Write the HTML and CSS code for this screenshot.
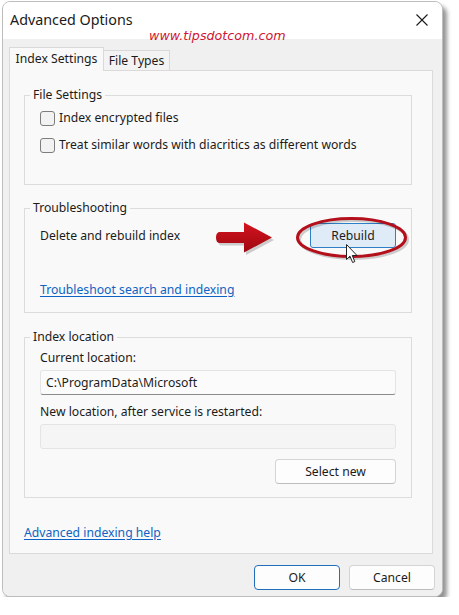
FILE: index.html
```html
<!DOCTYPE html>
<html>
<head>
<meta charset="utf-8">
<title>Advanced Options</title>
<link rel="stylesheet" href="styles.css">
</head>
<body>
<div class="dialog">
  <div class="titlebar">
    <span class="title">Advanced Options</span>
    <span class="watermark">www.tipsdotcom.com</span>
    <svg class="close" width="12" height="12" viewBox="0 0 12 12"><path d="M0.5 0.5 L11.5 11.5 M11.5 0.5 L0.5 11.5" stroke="#1a1a1a" stroke-width="1.1" fill="none"/></svg>
  </div>
  <div class="content">
    <div class="tabs">
      <div class="tab active">Index Settings</div>
      <div class="tab">File Types</div>
    </div>
    <div class="panel">
      <fieldset class="group g-file">
        <legend>File Settings</legend>
        <div class="check"><span class="box"></span><span>Index encrypted files</span></div>
        <div class="check second"><span class="box"></span><span>Treat similar words with diacritics as different words</span></div>
      </fieldset>
      <fieldset class="group g-trouble">
        <legend>Troubleshooting</legend>
        <div class="row">
          <span>Delete and rebuild index</span>
          <div class="rebuild-wrap">
            <svg class="arrow" width="62" height="34" viewBox="0 0 62 34">
              <defs>
                <linearGradient id="ag" x1="0" y1="0" x2="0" y2="1">
                  <stop offset="0" stop-color="#d4141f"/>
                  <stop offset="1" stop-color="#9e0711"/>
                </linearGradient>
              </defs>
              <path d="M8 12.5 L32 12.5 L32 3 L60 18 L32 33 L32 23.5 L8 23.5 Q4 23.5 4 18 Q4 12.5 8 12.5 Z" fill="#000" opacity="0.18"/>
              <path d="M6 10 L30 10 L30 0.5 L58 15.5 L30 30.5 L30 21 L6 21 Q2 21 2 15.5 Q2 10 6 10 Z" fill="url(#ag)"/>
            </svg>
            <button class="btn rebuild">Rebuild</button>
            <svg class="ellipse" width="116" height="46" viewBox="0 0 116 46">
              <ellipse cx="58.5" cy="23.5" rx="54" ry="19" fill="none" stroke="#000" stroke-opacity="0.18" stroke-width="3"/>
              <ellipse cx="56.5" cy="21.5" rx="54" ry="19" fill="none" stroke="#b3101c" stroke-width="3"/>
            </svg>
            <svg class="cursor" width="13" height="20" viewBox="0 0 13 20">
              <path d="M0.5 0.5 L0.5 15.5 L4 12.2 L6.6 18.5 L8.8 17.6 L6.3 11.5 L11 11.5 Z" fill="#fff" stroke="#222" stroke-width="1" stroke-linejoin="round"/>
            </svg>
          </div>
        </div>
        <a class="link trouble-link" href="#">Troubleshoot search and indexing</a>
      </fieldset>
      <fieldset class="group g-loc">
        <legend>Index location</legend>
        <div class="lbl first">Current location:</div>
        <div class="field">C:\ProgramData\Microsoft</div>
        <div class="lbl">New location, after service is restarted:</div>
        <div class="field empty"></div>
        <div class="btnrow"><button class="btn select">Select new</button></div>
      </fieldset>
      <a class="link help" href="#">Advanced indexing help</a>
    </div>
    <div class="footer">
      <button class="btn primary">OK</button>
      <button class="btn">Cancel</button>
    </div>
  </div>
</div>
</body>
</html>
```

FILE: styles.css
```css
html, body {
  margin: 0;
  padding: 0;
  background: #ffffff;
}

body {
  font-family: "Noto Sans", "Segoe UI", sans-serif;
  font-size: 12.2px;
  line-height: 16px;
  color: #1b1b1b;
}

.dialog {
  box-sizing: border-box;
  margin: 1px 0 0 2px;
  width: 441px;
  height: 596px;
  border: 1px solid #bdbdbd;
  border-radius: 8px;
  overflow: hidden;
  display: flex;
  flex-direction: column;
  box-shadow: 4px 5px 4px rgba(0, 0, 0, 0.42);
  background: #f0f0f0;
}

.titlebar {
  position: relative;
  height: 37px;
  flex: none;
  background: #ffffff;
  display: flex;
  align-items: center;
  padding-left: 7px;
}

.title {
  font-size: 14.3px;
  line-height: 18px;
  color: #1a1a1a;
  margin-top: -1px;
}

.watermark {
  position: absolute;
  left: 146px;
  top: 26px;
  font-family: "DejaVu Sans", sans-serif;
  font-style: italic;
  font-size: 12.7px;
  line-height: 16px;
  color: #cf1431;
}

.close {
  position: absolute;
  left: 413px;
  top: 12px;
}

.content {
  flex: 1;
  display: flex;
  flex-direction: column;
  background: #f0f0f0;
}

.tabs {
  display: flex;
  align-items: flex-end;
  height: 32px;
  margin: 0 0 -1px 6px;
  position: relative;
  z-index: 1;
}

.tab {
  box-sizing: border-box;
  border: 1px solid #d9d9d9;
  border-bottom: none;
  background: #f3f3f3;
  display: flex;
  align-items: center;
  justify-content: center;
  color: #1b1b1b;
}

.tab.active {
  width: 95px;
  height: 24px;
  background: #f9f9f9;
  padding-bottom: 1px;
}

.tab:not(.active) {
  width: 66px;
  height: 20px;
  border-left: none;
  margin-bottom: 1px;
  padding-top: 1px;
}

.panel {
  box-sizing: border-box;
  margin-left: 6px;
  width: 424px;
  height: 484px;
  border: 1px solid #dadada;
  background: #f9f9f9;
  padding: 0 20px 0 14px;
  display: flex;
  flex-direction: column;
  align-items: flex-start;
}

.group {
  box-sizing: border-box;
  width: 388px;
  margin: 0;
  padding: 0 15px 0 15px;
  border: 1px solid #dcdcdc;
  min-width: 0;
}

.group legend {
  padding: 0 3px;
  margin-left: -10px;
  line-height: 14px;
}

.g-file {
  margin-top: 17px;
  padding-bottom: 29px;
}

.check {
  display: flex;
  align-items: center;
  height: 20px;
  margin-top: 6px;
}

.check.second {
  margin-top: 7px;
}

.box {
  box-sizing: border-box;
  width: 15px;
  height: 15px;
  border: 1px solid #7d7d7d;
  border-radius: 3px;
  background: #f2f2f2;
  margin-right: 4px;
  flex: none;
}

.g-trouble {
  margin-top: 16px;
  padding-bottom: 14px;
}

.row {
  display: flex;
  align-items: center;
  justify-content: space-between;
  margin-top: 8px;
  height: 25px;
}

.rebuild-wrap {
  position: relative;
  width: 86px;
  height: 25px;
}

.btn {
  box-sizing: border-box;
  font-family: "Noto Sans", "Segoe UI", sans-serif;
  font-size: 12.2px;
  line-height: 16px;
  color: #1b1b1b;
  height: 25px;
  padding: 0;
  background: #fdfdfd;
  border: 1px solid #d4d4d4;
  border-bottom-color: #bdbdbd;
  border-radius: 4px;
}

.rebuild {
  width: 86px;
  background: #dfecf8;
  border: 1px solid #2f7fc6;
  border-radius: 3px;
}

.arrow {
  position: absolute;
  left: -96px;
  top: -1px;
}

.ellipse {
  position: absolute;
  left: -15px;
  top: -7px;
  pointer-events: none;
}

.cursor {
  position: absolute;
  left: 36px;
  top: 21px;
}

.link {
  color: #0d63c4;
  text-decoration: underline;
  text-underline-offset: 2px;
}

.trouble-link {
  display: block;
  margin-top: 34px;
  width: max-content;
}

.g-loc {
  margin-top: 17px;
  padding-bottom: 13px;
}

.lbl {
  margin-top: 9px;
}

.lbl.first {
  margin-top: 6px;
}

.field {
  box-sizing: border-box;
  height: 25px;
  margin-top: 4px;
  padding-left: 5px;
  display: flex;
  align-items: center;
  background: #fbfbfb;
  border: 1px solid #e4e4e4;
  border-bottom: 1px solid #8a8a8a;
  border-radius: 3px;
}

.field.empty {
  background: #f5f5f5;
  border-bottom-color: #e4e4e4;
}

.btnrow {
  display: flex;
  justify-content: flex-end;
  margin-top: 10px;
}

.select {
  width: 121px;
}

.help {
  margin-top: 27px;
}

.footer {
  display: flex;
  justify-content: flex-end;
  gap: 9px;
  padding: 11px 7px 0 0;
}

.footer .btn {
  width: 86px;
}

.footer .primary {
  border: 1px solid #1f6fbe;
}
```
